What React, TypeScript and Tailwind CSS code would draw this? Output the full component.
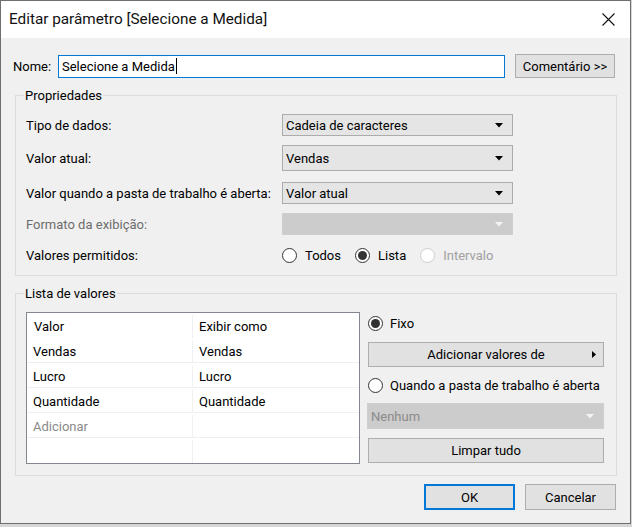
import React from "react";

const Arrow = ({ disabled = false }: { disabled?: boolean }) => (
  <svg width="8" height="5" viewBox="0 0 8 5" className="shrink-0">
    <path d="M0 0 H8 L4 4.5 Z" fill={disabled ? "#f4f4f4" : "#000"} />
  </svg>
);

const Select = ({
  value,
  h = "h-[22px]",
  disabled = false,
}: {
  value?: string;
  h?: string;
  disabled?: boolean;
}) => (
  <div
    className={`flex ${h} w-[231px] items-center justify-between border pl-[3px] pr-[9px] ${
      disabled ? "border-[#cfcfcf] bg-[#cccccc]" : "border-[#acacac] bg-[#e5e5e5]"
    }`}
  >
    <span>{value}</span>
    <Arrow disabled={disabled} />
  </div>
);

const Radio = ({ checked = false, disabled = false }: { checked?: boolean; disabled?: boolean }) => (
  <span
    className={`flex h-[15px] w-[15px] shrink-0 items-center justify-center rounded-full border bg-white ${
      disabled ? "border-[#cccccc]" : "border-[#333333]"
    }`}
  >
    {checked && <span className="h-[9px] w-[9px] rounded-full bg-[#333333]" />}
  </span>
);

const rows = [
  ["Valor", "Exibir como"],
  ["Vendas", "Vendas"],
  ["Lucro", "Lucro"],
  ["Quantidade", "Quantidade"],
  ["Adicionar", ""],
  ["", ""],
];

export default function App() {
  return (
    <div className="h-[527px] w-[632px] bg-[#d6d6d6] font-[Roboto,'Liberation_Sans',sans-serif] text-[13px] leading-none text-black">
      <div className="flex h-[524px] w-[631px] flex-col border border-[#6f6f6f] bg-[#f0f0f0]">
        {/* title bar */}
        <div className="flex h-[37px] shrink-0 items-center justify-between bg-white pl-[8px] pr-[15px]">
          <span className="text-[15.3px] text-[#111]">Editar parâmetro [Selecione a Medida]</span>
          <svg width="13" height="13" viewBox="0 0 13 13">
            <path d="M0.5 0.5 L12.5 12.5 M12.5 0.5 L0.5 12.5" stroke="#111" strokeWidth="1.1" />
          </svg>
        </div>

        <div className="flex flex-col px-[12px]">
          {/* Nome */}
          <div className="mt-[16px] flex items-center">
            <span className="w-[45px]">Nome:</span>
            <div className="flex h-[23px] w-[447px] items-center border border-[#0078d7] bg-white pl-[3px]">
              <span>Selecione a Medida</span>
              <span className="ml-[1px] h-[16px] w-[1px] bg-black" />
            </div>
            <button className="ml-[10px] h-[24px] w-[100px] border border-[#adadad] bg-[#e1e1e1]">
              Comentário &gt;&gt;
            </button>
          </div>

          {/* Propriedades */}
          <div className="relative ml-[2px] mt-[17px] flex h-[181px] w-[602px] flex-col border border-[#dcdcdc] pl-[10px] pt-[18px]">
            <span className="absolute -top-[7px] left-[8px] bg-[#f0f0f0] px-[1px]">Propriedades</span>
            <div className="flex h-[22px] items-center">
              <span className="w-[256px]">Tipo de dados:</span>
              <Select value="Cadeia de caracteres" />
            </div>
            <div className="mt-[9px] flex h-[26px] items-center">
              <span className="w-[256px]">Valor atual:</span>
              <Select value="Vendas" h="h-[26px]" />
            </div>
            <div className="mt-[11px] flex h-[22px] items-center">
              <span className="w-[256px]">Valor quando a pasta de trabalho é aberta:</span>
              <Select value="Valor atual" />
            </div>
            <div className="mt-[9px] flex h-[22px] items-center">
              <span className="w-[256px] text-[#6d6d6d]">Formato da exibição:</span>
              <Select disabled />
            </div>
            <div className="mt-[9px] flex h-[22px] items-center">
              <span className="w-[256px]">Valores permitidos:</span>
              <Radio />
              <span className="ml-[8px]">Todos</span>
              <span className="ml-[14px]"><Radio checked /></span>
              <span className="ml-[8px]">Lista</span>
              <span className="ml-[14px]"><Radio disabled /></span>
              <span className="ml-[8px] text-[#a0a0a0]">Intervalo</span>
            </div>
          </div>

          {/* Lista de valores */}
          <div className="relative ml-[2px] mt-[17px] flex h-[183px] w-[602px] border border-[#dcdcdc] pl-[10px] pt-[18px]">
            <span className="absolute -top-[7px] left-[8px] bg-[#f0f0f0] px-[1px]">Lista de valores</span>
            <div className="flex h-[152px] w-[334px] flex-col border border-[#828790] bg-white">
              {rows.map(([a, b], i) => (
                <div
                  key={i}
                  className={`flex h-[25px] shrink-0 pt-[2px] ${i > 0 && i < 5 ? "border-b border-[#f0f0f0]" : ""}`}
                >
                  <span
                    className={`flex w-[166px] items-center border-r border-[#f0f0f0] ${
                      i === 0 ? "pl-[7px]" : "pl-[6px]"
                    } ${a === "Adicionar" ? "text-[#8a8a8a]" : ""}`}
                  >
                    {a}
                  </span>
                  <span className="flex flex-1 items-center pl-[6px]">{b}</span>
                </div>
              ))}
            </div>

            <div className="ml-[8px] flex w-[236px] flex-col">
              <div className="mt-[4px] flex h-[15px] items-center">
                <Radio checked />
                <span className="ml-[7px]">Fixo</span>
              </div>
              <button className="mt-[11px] flex h-[25px] w-[236px] items-center border border-[#adadad] bg-[#e1e1e1] pl-[11px] pr-[7px]">
                <span className="flex-1 text-center">Adicionar valores de</span>
                <svg width="4" height="7" viewBox="0 0 4 7">
                  <path d="M0 0 L4 3.5 L0 7 Z" fill="#000" />
                </svg>
              </button>
              <div className="mt-[11px] flex h-[15px] items-center">
                <Radio />
                <span className="ml-[7px]">Quando a pasta de trabalho é aberta</span>
              </div>
              <div className="-ml-[1px] mt-[10px] flex h-[26px] w-[237px] items-center justify-between border border-[#cfcfcf] bg-[#cccccc] pl-[3px] pr-[9px]">
                <span className="text-[#8a8a8a]">Nenhum</span>
                <Arrow disabled />
              </div>
              <button className="mt-[9px] h-[25px] w-[236px] border border-[#adadad] bg-[#e1e1e1]">
                Limpar tudo
              </button>
            </div>
          </div>

          {/* footer */}
          <div className="mt-[8px] flex justify-end gap-[10px] pr-[2px]">
            <button className="h-[26px] w-[91px] border-2 border-[#0078d7] bg-[#e1e1e1]">OK</button>
            <button className="h-[26px] w-[91px] border border-[#adadad] bg-[#e1e1e1]">Cancelar</button>
          </div>
        </div>
      </div>
    </div>
  );
}
